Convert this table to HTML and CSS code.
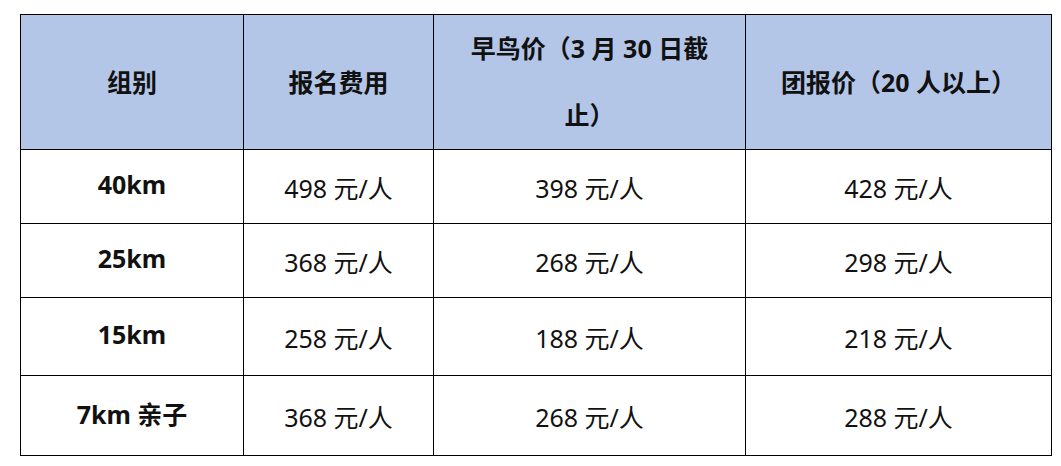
FILE: index.html
```html
<!DOCTYPE html>
<html lang="zh-CN">
<head>
<meta charset="utf-8">
<title>报名费用</title>
<link rel="stylesheet" href="styles.css">
</head>
<body>
<table class="fee-table">
  <colgroup>
    <col class="c1"><col class="c2"><col class="c3"><col class="c4">
  </colgroup>
  <thead>
    <tr class="head-row">
      <th>组别</th>
      <th>报名费用</th>
      <th class="wrap">早鸟价（3 月 30 日截<br>止）</th>
      <th>团报价（20 人以上）</th>
    </tr>
  </thead>
  <tbody>
    <tr class="r1"><td class="group">40km</td><td class="price">498 元/人</td><td class="price">398 元/人</td><td class="price">428 元/人</td></tr>
    <tr class="r2"><td class="group">25km</td><td class="price">368 元/人</td><td class="price">268 元/人</td><td class="price">298 元/人</td></tr>
    <tr class="r3"><td class="group">15km</td><td class="price">258 元/人</td><td class="price">188 元/人</td><td class="price">218 元/人</td></tr>
    <tr class="r4"><td class="group">7km 亲子</td><td class="price">368 元/人</td><td class="price">268 元/人</td><td class="price">288 元/人</td></tr>
  </tbody>
</table>
</body>
</html>
```
FILE: styles.css
```css
html, body {
  margin: 0;
  padding: 0;
  background: #ffffff;
}
body {
  padding: 14px 0 0 20px;
  font-family: "Noto Sans", "Noto Sans CJK SC", sans-serif;
  color: #000000;
}
.fee-table {
  border-collapse: collapse;
  table-layout: fixed;
  width: 1031px;
}
.c1 { width: 223px; }
.c2 { width: 190px; }
.c3 { width: 312px; }
.c4 { width: 306px; }
.fee-table th,
.fee-table td {
  border: 1px solid #000000;
  padding: 0;
  text-align: center;
  vertical-align: middle;
}
.head-row { height: 135px; }
.head-row th {
  background: #b4c6e7;
  font-size: 25px;
  font-weight: 700;
  line-height: 67px;
  color: #111111;
}
.r1 { height: 74px; }
.r2 { height: 74px; }
.r3 { height: 78px; }
.r4 { height: 80px; }
.group {
  font-size: 25px;
  font-weight: 700;
  padding-bottom: 6px !important;
  color: #111111;
}
.price {
  font-size: 25px;
  font-weight: 400;
  color: #111111;
}
```
